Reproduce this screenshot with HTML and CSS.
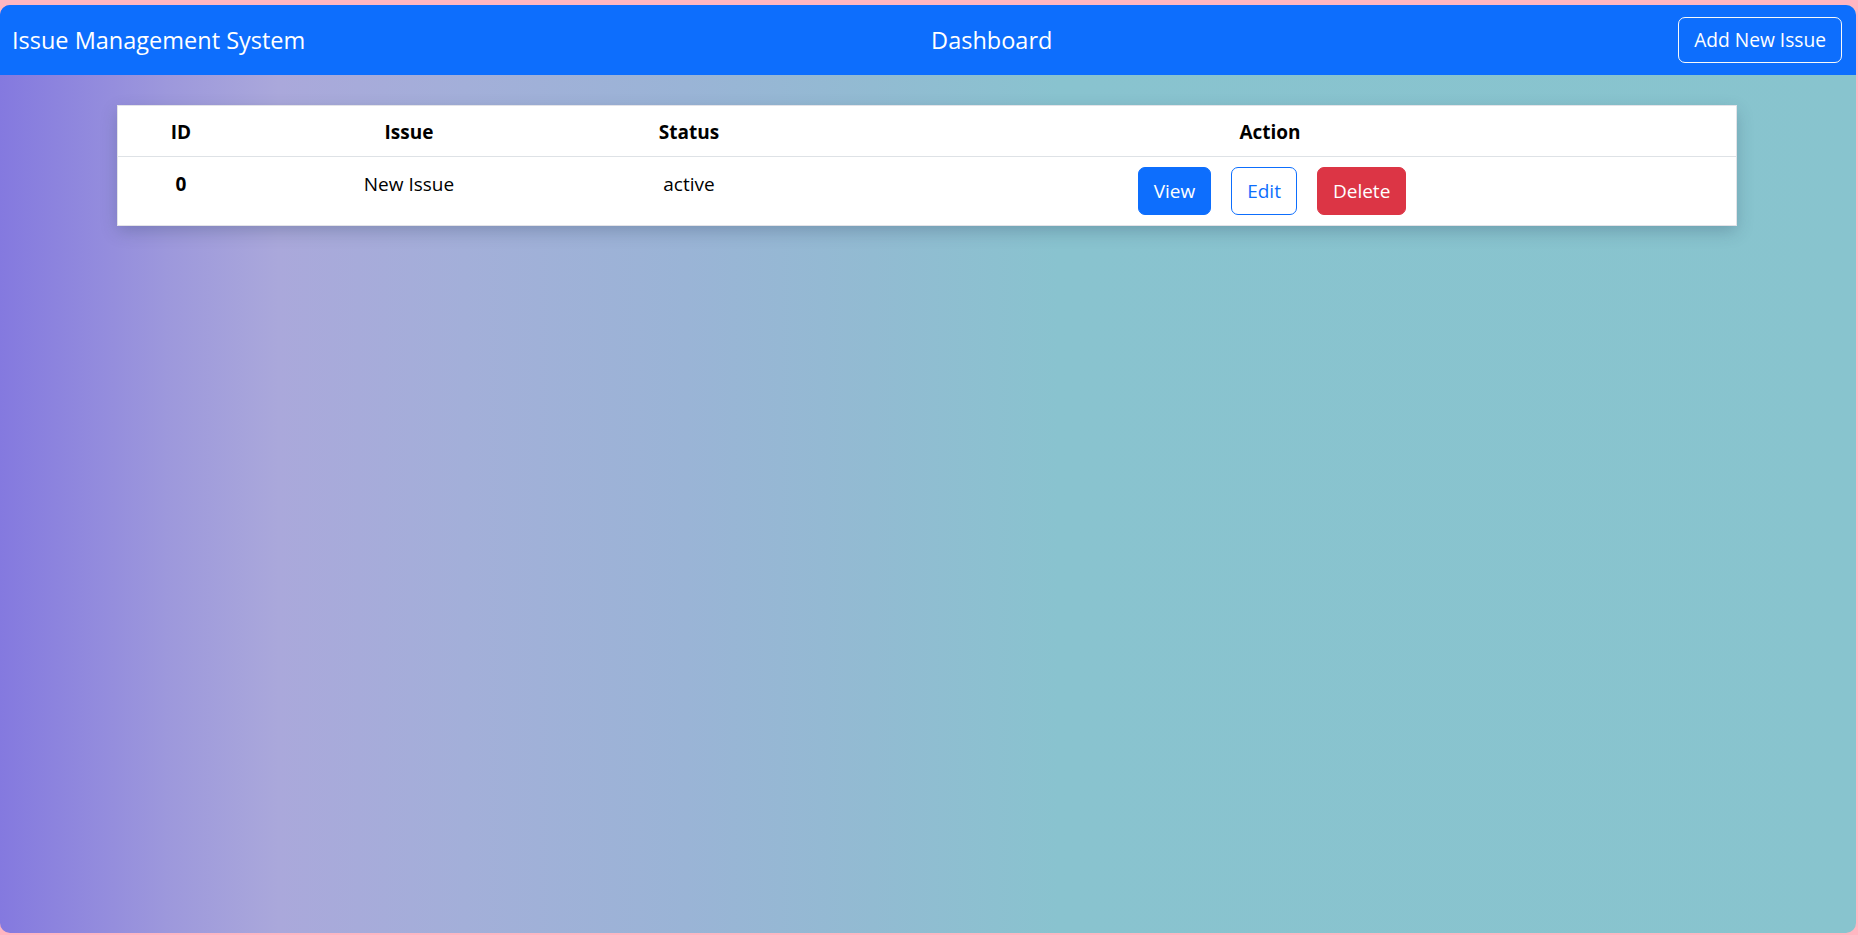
FILE: index.html
```html
<!DOCTYPE html>
<html lang="en">
<head>
<meta charset="utf-8">
<title>Issue Management System</title>
<link rel="stylesheet" href="styles.css">
</head>
<body>
<div class="app">
  <header class="topbar">
    <div class="brand">Issue Management System</div>
    <div class="page-title">Dashboard</div>
    <button class="btn btn-outline-light">Add New Issue</button>
  </header>
  <main class="content">
    <table class="issues">
      <thead>
        <tr>
          <th class="col-id">ID</th>
          <th class="col-issue">Issue</th>
          <th class="col-status">Status</th>
          <th class="col-action">Action</th>
        </tr>
      </thead>
      <tbody>
        <tr>
          <th class="col-id">0</th>
          <td>New Issue</td>
          <td>active</td>
          <td>
            <div class="actions">
              <button class="btn btn-primary">View</button>
              <button class="btn btn-outline-primary">Edit</button>
              <button class="btn btn-danger">Delete</button>
            </div>
          </td>
        </tr>
      </tbody>
    </table>
  </main>
</div>
</body>
</html>
```
FILE: styles.css
```css
* { box-sizing: border-box; }
html, body { margin: 0; padding: 0; }
body {
  background: #ffb6c1;
  font-family: "Open Sans", "Noto Sans", sans-serif;
  color: #000;
  height: 935px;
  overflow: hidden;
}
.app {
  margin-top: 5px;
  width: 1856px;
  height: 928px;
  border-radius: 10px;
  overflow: hidden;
  background: linear-gradient(to right, #8479df 0%, #9d98dc 9%, #aaa8db 15%, #a3afd9 25%, #9ab4d6 37%, #92bbd2 47%, #89c3cf 57%, #88c4ce 100%);
}
.topbar {
  height: 70px;
  background: #0d6efd;
  display: flex;
  align-items: center;
  justify-content: space-between;
  padding: 0 14px 0 12px;
  color: #fff;
}
.brand, .page-title {
  font-size: 23.5px;
  font-weight: 400;
}
.btn {
  font-family: inherit;
  font-size: 19px;
  line-height: 28px;
  padding: 8px 15px;
  border-radius: 7px;
  border: 1px solid transparent;
  cursor: pointer;
  background: transparent;
}
.btn-outline-light {
  color: #fff;
  border-color: #f8f9fa;
  height: 46px;
  padding: 0 15px;
  font-size: 19.2px;
}
.btn-primary { background: #0d6efd; color: #fff; border-color: #0d6efd; }
.btn-outline-primary { background: #fff; color: #0d6efd; border-color: #0d6efd; }
.btn-danger { background: #dc3545; color: #fff; border-color: #dc3545; }
.content { padding-top: 31px; }
.issues {
  width: 1618px;
  margin: 0 0 0 118px;
  border-collapse: collapse;
  background: #fff;
  box-shadow: 0 6px 16px rgba(40, 60, 90, 0.28);
  outline: 1px solid #e3e3e8;
}
.issues th, .issues td {
  text-align: center;
  font-size: 19px;
  line-height: 30px;
  vertical-align: top;
}
.issues thead th {
  font-weight: 700;
  padding: 11px 8px 9px;
  border-bottom: 1px solid #dee2e6;
}
.issues tbody th, .issues tbody td {
  padding: 12px 8px 8px;
}
.issues tbody td:last-child { padding-top: 10px; padding-bottom: 10px; }
.issues tbody th { font-weight: 700; }
.col-id { width: 126px; }
.col-issue { width: 330px; }
.col-status { width: 230px; }
.actions {
  display: flex;
  justify-content: center;
  gap: 20px;
  padding-left: 4px;
}
.actions .btn { height: 48px; }
```
